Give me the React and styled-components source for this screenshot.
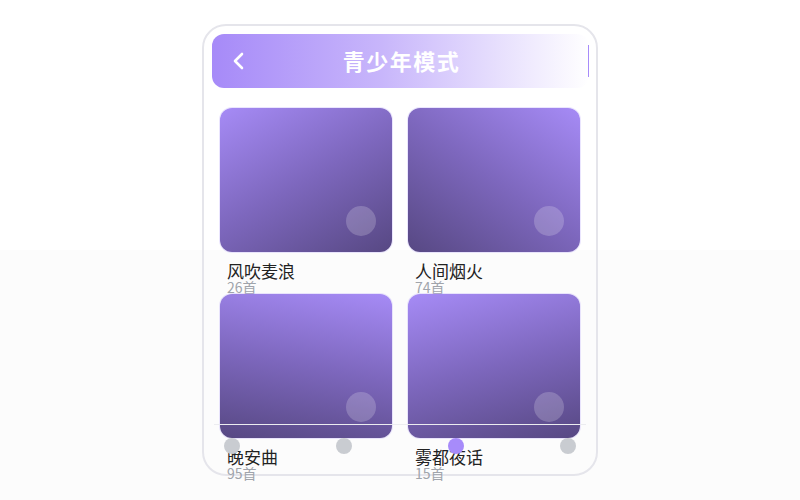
import React from 'react'
import styled, { createGlobalStyle } from 'styled-components'

const GlobalStyle = createGlobalStyle`
  html, body {
    margin: 0;
    padding: 0;
    height: 500px;
  }
  body {
    background: linear-gradient(to bottom, #ffffff 0, #ffffff 250px, #fcfcfc 250px);
    font-family: "Noto Sans CJK SC", "Noto Sans", sans-serif;
  }
`

const Page = styled.div`
  height: 500px;
  display: flex;
  align-items: center;
  justify-content: center;
`

const Phone = styled.div`
  position: relative;
  box-sizing: border-box;
  width: 396px;
  height: 452px;
  border: 2px solid #e5e5eb;
  border-radius: 24px;
  padding: 8px 7px 0 8px;
`

const Header = styled.div`
  position: relative;
  height: 54px;
  border-radius: 12px;
  background: linear-gradient(to right, #a68af8 0%, #c8b6fb 45%, #ffffff 100%);
  display: flex;
  align-items: center;
  justify-content: center;

  /* thin accent on the right edge, straight part only */
  &::after {
    content: '';
    position: absolute;
    right: 0;
    top: 11px;
    bottom: 11px;
    width: 1px;
    background: #a78bfa;
  }
`

const Back = styled.div`
  position: absolute;
  left: 17px;
  top: 17px;
  width: 20px;
  height: 20px;
  display: flex;
`

const Title = styled.h1`
  margin: 0;
  color: #ffffff;
  font-size: 22px;
  font-weight: 700;
  letter-spacing: 1.5px;
  margin-left: 2px;
  margin-top: -3px;
`

const Grid = styled.div`
  display: grid;
  grid-template-columns: 172px 172px;
  column-gap: 16px;
  padding: 20px 9px 0 8px;
`

const Item = styled.div`
  display: flex;
  flex-direction: column;
`

const Cover = styled.div`
  position: relative;
  height: 144px;
  border-radius: 12px;
  background: linear-gradient(${p => p.$angle}deg, #a68bf6 0%, #7d67bd 50%, #574883 100%);
  box-shadow: 0 0 0 1px rgba(196, 181, 253, 0.35);
`

const PlayDot = styled.div`
  position: absolute;
  right: 16px;
  bottom: 16px;
  width: 30px;
  height: 30px;
  border-radius: 50%;
  background: rgba(255, 255, 255, 0.2);
`

const Name = styled.div`
  margin: 10px 0 0 7px;
  font-size: 17px;
  line-height: 18px;
  color: #222222;
`

const Count = styled.div`
  margin-left: 7px;
  font-size: 14px;
  line-height: 14px;
  color: #a0a4ab;
`

const TabBar = styled.div`
  position: absolute;
  left: 10px;
  right: 10px;
  top: 398px;
  border-top: 1px solid #ececf0;
  padding: 13px 10px 0;
  display: flex;
  justify-content: space-between;
`

const Tab = styled.div`
  width: 16px;
  height: 16px;
  border-radius: 50%;
  background: ${p => (p.$active ? '#a78bfa' : '#c9ccd1')};
`

const albums = [
  { name: '风吹麦浪', count: 26, angle: 150 },
  { name: '人间烟火', count: 74, angle: 215 },
  { name: '晚安曲', count: 95, angle: 190 },
  { name: '雾都夜话', count: 15, angle: 165 },
]

const App = () => {
  return (
    <Page>
      <GlobalStyle />
      <Phone>
        <Header>
          <Back>
            <svg width="20" height="20" viewBox="0 0 20 20" fill="none">
              <path d="M13 3 L6 10 L13 17" stroke="#fff" strokeWidth="2.6" strokeLinecap="round" strokeLinejoin="round" />
            </svg>
          </Back>
          <Title>青少年模式</Title>
        </Header>
        <Grid>
          {albums.map((a) => (
            <Item key={a.name}>
              <Cover $angle={a.angle}>
                <PlayDot />
              </Cover>
              <Name>{a.name}</Name>
              <Count>{a.count}首</Count>
            </Item>
          ))}
        </Grid>
        <TabBar>
          <Tab />
          <Tab />
          <Tab $active />
          <Tab />
        </TabBar>
      </Phone>
    </Page>
  )
}

export default App
